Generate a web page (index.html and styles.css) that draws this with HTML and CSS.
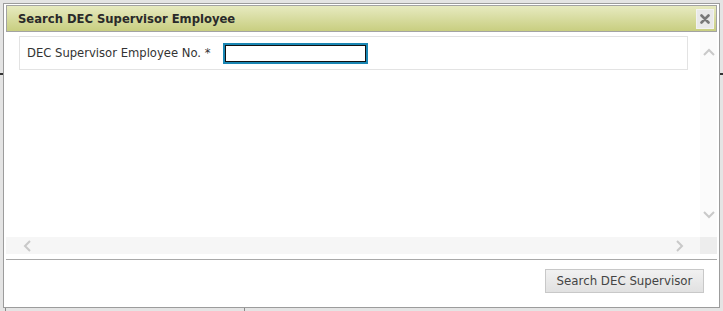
FILE: index.html
```html
<!DOCTYPE html>
<html>
<head>
<meta charset="utf-8">
<link rel="stylesheet" href="styles.css">
</head>
<body>
<div class="page">
  <div class="page-rule"></div>
  <div class="page-grid">
    <div class="page-cell first"></div>
    <div class="page-cell second"></div>
  </div>
</div>

<div class="dialog">
  <div class="titlebar">
    <span class="title">Search DEC Supervisor Employee</span>
    <span class="close"><svg width="10" height="10" viewBox="0 0 10 10"><path d="M1.5 1.5 L8.5 8.5 M8.5 1.5 L1.5 8.5" stroke="#787878" stroke-width="2.6" stroke-linecap="round"/></svg></span>
  </div>
  <div class="scroller">
    <div class="scroll-content">
      <div class="form-row">
        <label class="label">DEC Supervisor Employee No. *</label>
        <input class="field" type="text">
      </div>
    </div>
    <div class="vbar">
      <svg class="chev" width="12" height="8" viewBox="0 0 12 8"><path d="M1 7 L6 2 L11 7" fill="none" stroke="#c9c9c9" stroke-width="2"/></svg>
      <svg class="chev" width="12" height="8" viewBox="0 0 12 8"><path d="M1 1 L6 6 L11 1" fill="none" stroke="#c9c9c9" stroke-width="2"/></svg>
    </div>
    <div class="hbar">
      <svg class="chev" width="8" height="12" viewBox="0 0 8 12"><path d="M7 1 L2 6 L7 11" fill="none" stroke="#c9c9c9" stroke-width="2"/></svg>
      <svg class="chev" width="8" height="12" viewBox="0 0 8 12"><path d="M1 1 L6 6 L1 11" fill="none" stroke="#c9c9c9" stroke-width="2"/></svg>
    </div>
    <div class="corner"></div>
  </div>
  <div class="footer">
    <button class="btn" type="button">Search DEC Supervisor</button>
  </div>
</div>
</body>
</html>
```

FILE: styles.css
```css
html, body {
  margin: 0;
  padding: 0;
}
body {
  background: #e4e4e4;
  width: 723px;
  height: 311px;
  overflow: hidden;
  font-family: "DejaVu Sans", Verdana, sans-serif;
  position: relative;
}
.page {
  padding-top: 73px;
}
.page-rule {
  height: 2px;
  background: #333;
}
.page-grid {
  margin-top: 233px;
  display: flex;
  height: 10px;
  padding-left: 5px;
}
.page-cell {
  border-left: 1px solid #8a8a8a;
}
.page-cell.first {
  width: 238px;
}
.page-cell.second {
  flex: 1;
}

.dialog {
  position: absolute;
  left: 3px;
  top: 3px;
  width: 711px;
  height: 302px;
  border: 1px solid #9c9c9c;
  background: #fff;
  padding: 1px 2px 0 2px;
  display: flex;
  flex-direction: column;
}
.titlebar {
  height: 25px;
  border: 1px solid #a3a3a3;
  background: linear-gradient(#e7eac0, #c8ce80);
  display: flex;
  align-items: center;
  justify-content: space-between;
  padding: 0 2px 0 11px;
}
.title {
  font-weight: bold;
  font-size: 11.6px;
  color: #2a2a2a;
}
.close {
  width: 18px;
  height: 20px;
  background: #e9e9e9;
  border: 1px solid #f2f2f2;
  box-sizing: border-box;
  display: flex;
  align-items: center;
  justify-content: center;
}
.close svg {
  display: block;
}
.scroller {
  height: 222px;
  display: grid;
  grid-template-columns: 1fr 17px;
  grid-template-rows: 1fr 17px;
}
.scroll-content {
  padding: 4px 12px 0 13px;
}
.form-row {
  height: 32px;
  border: 1px solid #e3e3e3;
  display: flex;
  align-items: center;
  padding-left: 7px;
  gap: 12px;
}
.label {
  font-size: 11.6px;
  color: #333;
}
.field {
  width: 145px;
  height: 21px;
  box-sizing: border-box;
  border: 2px solid #1a86b3;
  box-shadow: inset 0 0 0 1px #111;
  outline: none;
  margin: 0;
  padding: 0;
  background: #fff;
}
.vbar {
  background: #fbfbfb;
  display: flex;
  flex-direction: column;
  align-items: center;
  justify-content: space-between;
  padding: 16px 0 18px;
}
.hbar {
  background: #f6f6f6;
  display: flex;
  align-items: center;
  justify-content: space-between;
  padding: 0 16px 0 17px;
}
.corner {
  background: #ededed;
}
.chev {
  display: block;
}
.footer {
  margin-top: 5px;
  border-top: 1px solid #a9a9a9;
  display: flex;
  justify-content: flex-end;
  padding: 9px 13px 0 0;
}
.btn {
  width: 159px;
  height: 24px;
  border: 1px solid #c8c8c8;
  background: linear-gradient(#f1f1f1, #e1e1e1);
  font-family: "DejaVu Sans", Verdana, sans-serif;
  font-size: 11.8px;
  color: #444;
  padding: 0;
}
```
